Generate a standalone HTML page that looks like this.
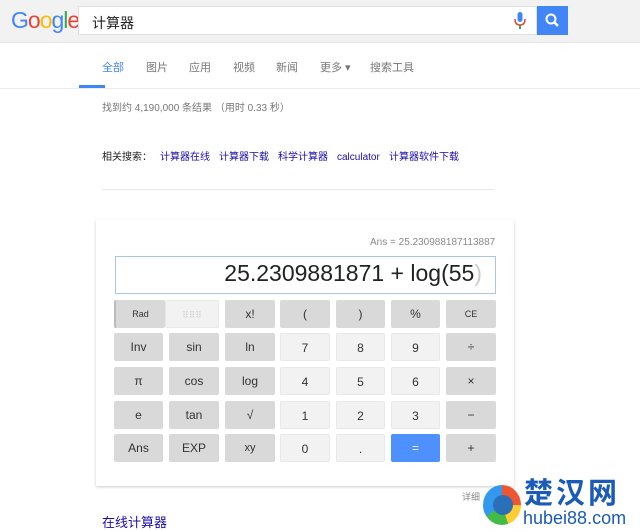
<!DOCTYPE html>
<html><head><meta charset="utf-8"><style>
*{margin:0;padding:0;box-sizing:border-box}
body{width:640px;height:530px;overflow:hidden;background:#fff;font-family:"Liberation Sans","Noto Sans CJK SC",sans-serif;position:relative}
.a{position:absolute}
.hdr{left:0;top:0;width:640px;height:43px;background:#f2f2f2;border-bottom:1px solid #e4e4e4}
.logo{left:11px;top:7px;font-size:23px;letter-spacing:-1px}
.sb{left:78px;top:6px;width:459px;height:29px;background:#fff;border:1px solid #e0e0e0;font-size:14px;padding:6px 0 0 13px;color:#222}
.btn{left:537px;top:6px;width:31px;height:29px;background:#4285f4}
.tab{top:59px;font-size:11px;color:#777}
.rl{top:151px;font-size:10px;color:#1a0dab;line-height:14px}
.bt{position:absolute;height:28px;font-size:12px;color:#333;text-align:center;line-height:28px;border-radius:2px}
.g{background:#d9d9d9}.l{background:#f2f2f2;border:1px solid #e8e8e8}
</style></head><body>
<div class="a hdr"></div>
<div class="a logo"><span style="color:#4285f4">G</span><span style="color:#ea4335">o</span><span style="color:#fbbc05">o</span><span style="color:#4285f4">g</span><span style="color:#34a853">l</span><span style="color:#ea4335">e</span></div>
<div class="a sb">计算器</div>
<svg class="a" style="left:514px;top:12px" width="12" height="18"><rect x="3.5" y="0" width="5" height="10" rx="2.5" fill="#4285f4"/><path d="M1 7 Q1 13 6 13 Q11 13 11 7" stroke="#ea4335" fill="none" stroke-width="1.5"/><rect x="5" y="13" width="2" height="4" fill="#34a853"/></svg>
<div class="a btn"><svg width="31" height="29"><circle cx="14" cy="13" r="4.5" stroke="#fff" stroke-width="2" fill="none"/><line x1="17.5" y1="16.5" x2="21" y2="20" stroke="#fff" stroke-width="2.5"/></svg></div>
<div class="a tab" style="left:102px;color:#4285f4">全部</div>
<div class="a tab" style="left:146px">图片</div>
<div class="a tab" style="left:189px">应用</div>
<div class="a tab" style="left:233px">视频</div>
<div class="a tab" style="left:276px">新闻</div>
<div class="a tab" style="left:320px">更多 ▾</div>
<div class="a tab" style="left:370px">搜索工具</div>
<div class="a" style="left:79px;top:85px;width:26px;height:3px;background:#4285f4"></div>
<div class="a" style="left:0;top:88px;width:640px;height:1px;background:#ebebeb"></div>
<div class="a" style="left:102px;top:99px;font-size:10px;color:#777">找到约 4,190,000 条结果 （用时 0.33 秒）</div>
<div class="a" style="left:102px;top:151px;font-size:10px;color:#222;line-height:14px">相关搜索：</div>
<div class="a rl" style="left:160px">计算器在线</div>
<div class="a rl" style="left:219px">计算器下载</div>
<div class="a rl" style="left:278px">科学计算器</div>
<div class="a rl" style="left:337px">calculator</div>
<div class="a rl" style="left:389px">计算器软件下载</div>
<div class="a" style="left:102px;top:189px;width:392px;height:1px;background:#e8e8e8"></div>
<div class="a" style="left:96px;top:220px;width:418px;height:266px;background:#fff;box-shadow:0 1px 3px rgba(0,0,0,.2)"></div>
<div class="a" style="left:370px;top:237px;font-size:10px;color:#888">Ans = 25.230988187113887</div>
<div class="a" style="left:115px;top:256px;width:381px;height:38px;border:1px solid #aac4e4;font-size:23px;color:#222;text-align:right;padding:3px 13px 0 0;white-space:nowrap">25.2309881871 + log(55<span style="color:#ccc">)</span></div>
<div class="bt g" style="left:114px;top:300px;width:51px;font-size:9px;border-left:2px solid #bbb">Rad</div>
<div class="bt l" style="left:165px;top:300px;width:54px;color:#ccc;font-size:9px">⠿⠿⠿</div>
<div class="bt g" style="left:225px;top:300px;width:50px">x!</div>
<div class="bt g" style="left:280px;top:300px;width:50px">(</div>
<div class="bt g" style="left:336px;top:300px;width:49px">)</div>
<div class="bt g" style="left:391px;top:300px;width:49px">%</div>
<div class="bt g" style="left:446px;top:300px;width:50px;font-size:9px">CE</div>

<div class="bt g" style="left:114px;top:333px;width:49px">Inv</div>
<div class="bt g" style="left:169px;top:333px;width:50px">sin</div>
<div class="bt g" style="left:225px;top:333px;width:50px">ln</div>
<div class="bt l" style="left:280px;top:333px;width:50px">7</div>
<div class="bt l" style="left:336px;top:333px;width:49px">8</div>
<div class="bt l" style="left:391px;top:333px;width:49px">9</div>
<div class="bt g" style="left:446px;top:333px;width:50px">÷</div>

<div class="bt g" style="left:114px;top:367px;width:49px">π</div>
<div class="bt g" style="left:169px;top:367px;width:50px">cos</div>
<div class="bt g" style="left:225px;top:367px;width:50px">log</div>
<div class="bt l" style="left:280px;top:367px;width:50px">4</div>
<div class="bt l" style="left:336px;top:367px;width:49px">5</div>
<div class="bt l" style="left:391px;top:367px;width:49px">6</div>
<div class="bt g" style="left:446px;top:367px;width:50px">×</div>

<div class="bt g" style="left:114px;top:401px;width:49px">e</div>
<div class="bt g" style="left:169px;top:401px;width:50px">tan</div>
<div class="bt g" style="left:225px;top:401px;width:50px">√</div>
<div class="bt l" style="left:280px;top:401px;width:50px">1</div>
<div class="bt l" style="left:336px;top:401px;width:49px">2</div>
<div class="bt l" style="left:391px;top:401px;width:49px">3</div>
<div class="bt g" style="left:446px;top:401px;width:50px">−</div>

<div class="bt g" style="left:114px;top:434px;width:49px">Ans</div>
<div class="bt g" style="left:169px;top:434px;width:50px">EXP</div>
<div class="bt g" style="left:225px;top:434px;width:50px;font-size:11px">xy</div>
<div class="bt l" style="left:280px;top:434px;width:50px">0</div>
<div class="bt l" style="left:336px;top:434px;width:49px">.</div>
<div class="bt" style="left:391px;top:434px;width:49px;background:#4d90fe;color:#fff">=</div>
<div class="bt g" style="left:446px;top:434px;width:50px">+</div>

<div class="a" style="left:462px;top:490px;font-size:9px;color:#888">详细</div>
<div class="a" style="left:102px;top:512px;font-size:13px;color:#1a0dab">在线计算器</div>
<div class="a" style="left:483px;top:485px;width:38px;height:40px;border-radius:50%;background:conic-gradient(#e53 0 25%,#fc3 0 45%,#4b4 0 65%,#39e 0 100%)"></div>
<div class="a" style="left:493px;top:495px;width:20px;height:20px;border-radius:50%;background:#2a6fb8"></div>
<div class="a" style="left:524px;top:478px;font-size:29px;font-weight:bold;color:#1a5bb8;letter-spacing:3px;line-height:32px">楚汉网</div>
<div class="a" style="left:523px;top:507px;font-size:18px;color:#1a5bb8;line-height:22px">hubei88.com</div>
</body></html>
